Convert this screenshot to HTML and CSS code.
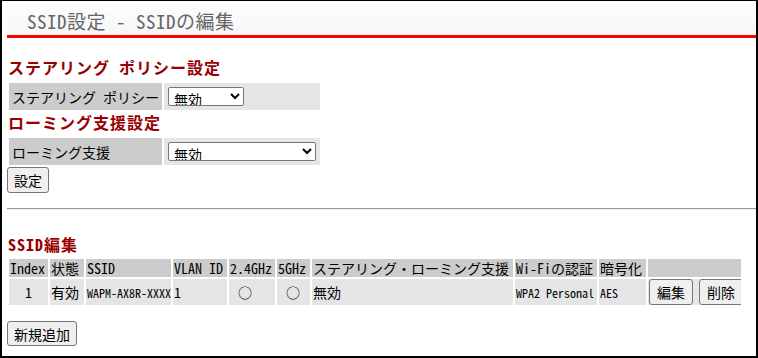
FILE: index.html
```html
<!DOCTYPE html>
<html lang="ja">
<head>
    <meta charset="UTF-8">
    <title>SSID設定 - SSIDの編集</title>
    <link rel="stylesheet" href="styles.css">
</head>
<body>
    <div class="frame">
        <div class="page-title">SSID設定 - SSIDの編集</div>

        <h2 class="section">ステアリング ポリシー設定</h2>
        <table class="form-table">
            <tr>
                <th class="label-cell">ステアリング ポリシー</th>
                <td class="value-cell">
                    <select class="sel sel-short"><option>無効</option></select>
                </td>
            </tr>
        </table>

        <h2 class="section section-tight">ローミング支援設定</h2>
        <table class="form-table">
            <tr>
                <th class="label-cell">ローミング支援</th>
                <td class="value-cell">
                    <select class="sel sel-long"><option>無効</option></select>
                </td>
            </tr>
        </table>
        <button class="btn btn-block">設定</button>

        <hr class="divider">

        <h2 class="section section-ssid">SSID編集</h2>
        <table class="ssid-table">
            <colgroup>
                <col style="width: 39px">
                <col style="width: 34px">
                <col style="width: 85px">
                <col style="width: 54px">
                <col style="width: 46px">
                <col style="width: 33px">
                <col style="width: 201px">
                <col style="width: 82px">
                <col style="width: 47px">
                <col style="width: 93px">
            </colgroup>
            <tr class="head-row">
                <th>Index</th>
                <th>状態</th>
                <th>SSID</th>
                <th>VLAN ID</th>
                <th>2.4GHz</th>
                <th>5GHz</th>
                <th>ステアリング・ローミング支援</th>
                <th>Wi-Fiの認証</th>
                <th>暗号化</th>
                <th></th>
            </tr>
            <tr class="data-row">
                <td class="center">1</td>
                <td>有効</td>
                <td class="small">WAPM-AX8R-XXXX</td>
                <td>1</td>
                <td class="mark">○</td>
                <td class="mark">○</td>
                <td>無効</td>
                <td class="small">WPA2 Personal</td>
                <td class="small">AES</td>
                <td class="actions">
                    <div class="action-group">
                        <button class="btn btn-row">編集</button>
                        <button class="btn btn-row">削除</button>
                    </div>
                </td>
            </tr>
        </table>

        <button class="btn btn-block btn-add">新規追加</button>
    </div>
</body>
</html>
```

FILE: styles.css
```css
html, body {
    margin: 0;
    padding: 0;
    background: #ffffff;
}
body {
    font-family: "Noto Sans Mono CJK JP", "Noto Sans CJK JP", monospace;
    font-size: 14px;
    color: #000000;
}
.frame {
    box-sizing: border-box;
    width: 758px;
    height: 358px;
    border-style: solid;
    border-color: #000000;
    border-width: 1px 2px 2px 2px;
    padding-left: 5px;
    overflow: hidden;
}
.page-title {
    height: 37px;
    box-sizing: border-box;
    padding: 6px 0 0 20px;
    line-height: 28px;
    font-size: 19px;
    letter-spacing: 0.5px;
    color: #666666;
    background: linear-gradient(#fdfdfd, #f7f7f7);
    border-bottom: 3px solid #ff0000;
}
.section {
    margin: 19px 0 3px;
    padding-left: 1px;
    font-size: 16px;
    line-height: 21px;
    font-weight: bold;
    letter-spacing: 1px;
    color: #990000;
}
.section-tight {
    margin-top: 0;
}
.section-ssid {
    margin-top: 24px;
    margin-bottom: 2px;
}
.form-table {
    border-spacing: 2px;
    margin: 0;
}
.form-table th,
.form-table td {
    box-sizing: border-box;
    height: 27px;
    padding: 0 3px;
    text-align: left;
    font-weight: normal;
    vertical-align: middle;
}
.label-cell {
    width: 153px;
    background: #cccccc;
    white-space: nowrap;
}
.value-cell {
    width: 156px;
    background: #e5e5e5;
}
.form-table .value-cell {
    padding-left: 4px;
}
.sel {
    display: block;
    box-sizing: border-box;
    height: 19px;
    margin: 0;
    padding: 0 0 0 1px;
    font-family: inherit;
    font-size: 14px;
    line-height: 17px;
    color: #000000;
    background: #ffffff;
    border: 1px solid #767676;
    border-radius: 2px;
}
.sel-short {
    width: 76px;
}
.sel-long {
    width: 148px;
}
.btn {
    box-sizing: border-box;
    margin: 0;
    padding: 0 6px;
    font-family: inherit;
    font-size: 14px;
    color: #000000;
    background: #efefef;
    border: 1px solid #767676;
    border-radius: 3px;
    cursor: pointer;
}
.btn-block {
    display: block;
    height: 26px;
}
.btn-add {
    height: 25px;
    margin-top: 14px;
}
.divider {
    height: 0;
    margin: 15px 0 0;
    border: 0;
    border-top: 1px solid #9a9a9a;
    border-bottom: 1px solid #eeeeee;
}
.ssid-table {
    table-layout: fixed;
    width: 736px;
    border-spacing: 2px;
}
.ssid-table th,
.ssid-table td {
    box-sizing: border-box;
    padding: 0 0 0 1px;
    text-align: left;
    font-weight: normal;
    white-space: nowrap;
    overflow: hidden;
    vertical-align: middle;
}
.head-row th {
    height: 18px;
    line-height: 18px;
    background: #cccccc;
}
.data-row td {
    height: 26px;
    background: #e5e5e5;
}
.ssid-table .center {
    text-align: center;
    padding: 0;
}
.ssid-table .small {
    font-size: 12px;
}
.ssid-table .mark {
    padding-left: 9px;
}
.ssid-table .actions {
    padding-left: 1px;
}
.action-group {
    display: flex;
    gap: 6px;
}
.btn-row {
    height: 26px;
    padding: 0 7px;
}
```
